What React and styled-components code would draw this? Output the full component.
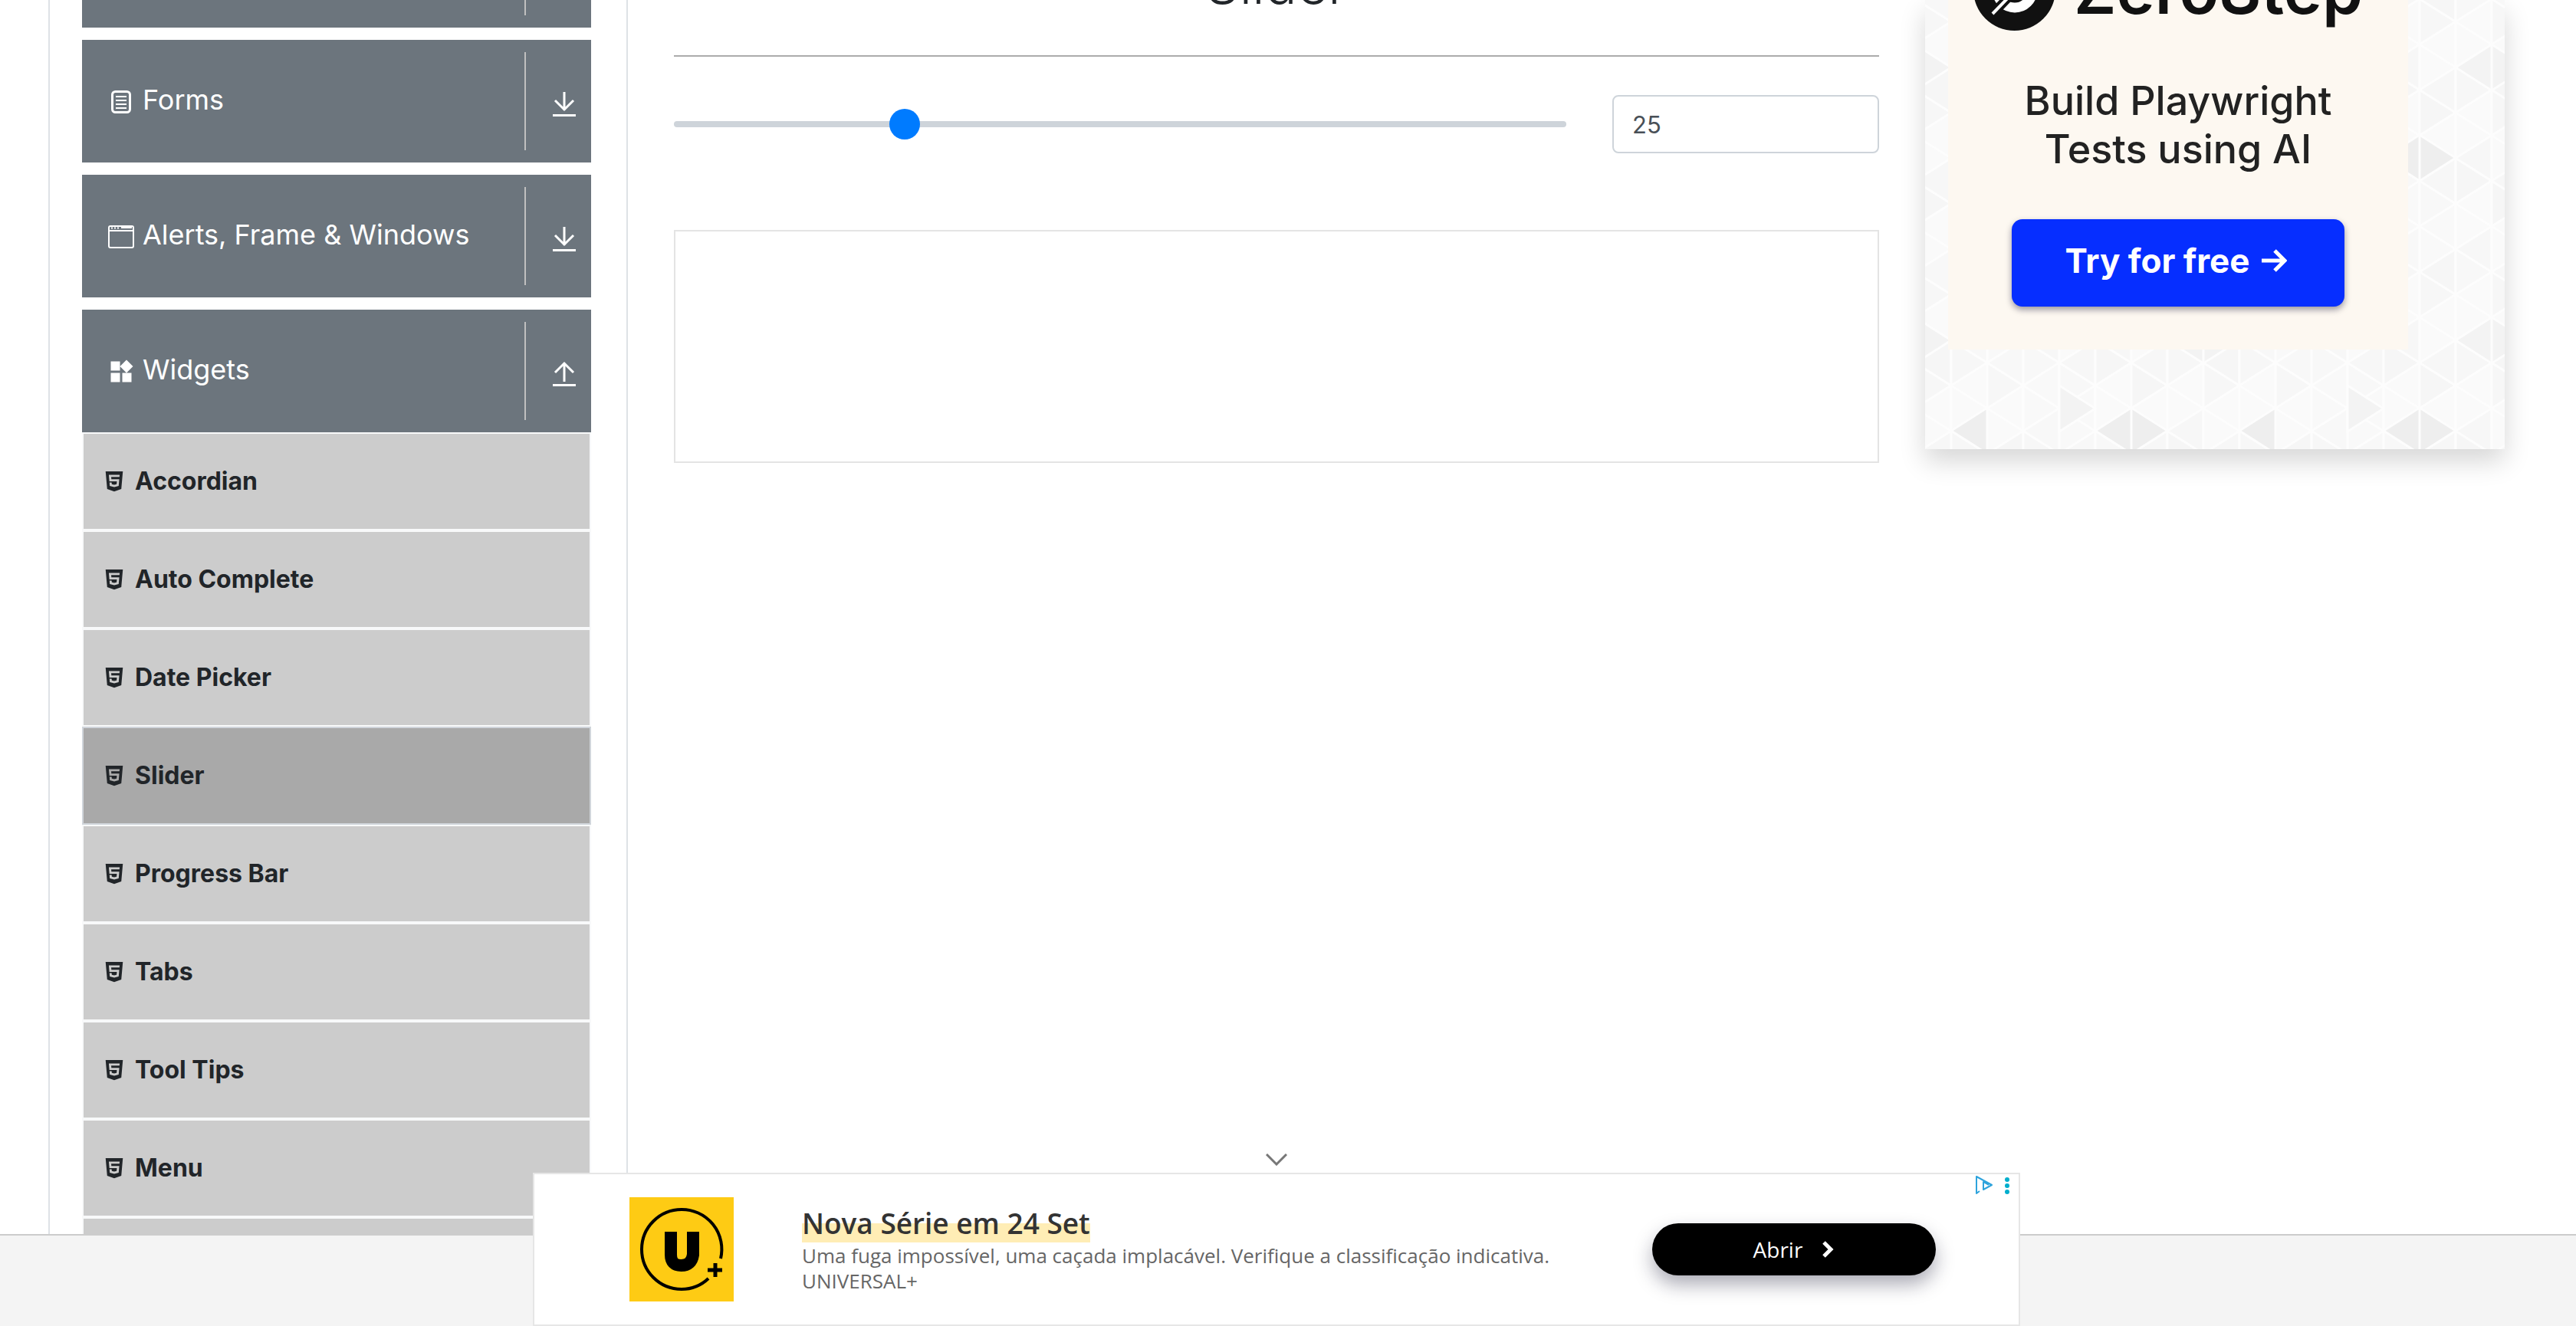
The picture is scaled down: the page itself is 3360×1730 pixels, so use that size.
import React, { useState } from "react";
import styled, { createGlobalStyle } from "styled-components";
import { FaHtml5 } from "react-icons/fa";
import { MdWidgets } from "react-icons/md";

const Global = createGlobalStyle`
  * { box-sizing: border-box; }
  html, body { margin: 0; padding: 0; }
  body { background: #fff; color: #212529; font-family: Inter, "Liberation Sans", sans-serif; }
  h1, h2, p, ul { margin: 0; padding: 0; }
`;

const Page = styled.div`
  display: flex;
  flex-direction: column;
  height: 100vh;
  overflow: hidden;
`;

const Columns = styled.div`
  flex: 1;
  min-height: 0;
  overflow: hidden;
  display: grid;
  grid-template-columns: 756px minmax(0, 1fr) 756px;
  padding: 0 93px 0 63px;
`;

const Sidebar = styled.nav`
  display: flex;
  flex-direction: column;
  gap: 16px;
  padding: 0 46px 0 42px;
  border-left: 2px solid #dee2e6;
  border-right: 2px solid #dee2e6;
`;

const GroupHeader = styled.button`
  display: flex;
  flex-direction: row;
  align-items: stretch;
  width: 100%;
  height: 160px;
  padding: 16px 0;
  border: 0;
  background: #6c757d;
  color: #fff;
  font: 400 36px/56px Inter, "Liberation Sans", sans-serif;
  text-align: left;
`;

const GroupCut = styled.div`
  display: flex;
  height: 36px;
  padding-bottom: 16px;
  background: #6c757d;
`;

const GroupTitle = styled.span`
  flex: 1;
  display: flex;
  align-items: center;
  gap: 10px;
  padding: 0 0 5px 33px;
  white-space: nowrap;
  svg { margin-top: 6px; }
`;

const GroupToggle = styled.span`
  width: 87px;
  border-left: 2px solid #c0c0c0;
  display: flex;
  align-items: center;
  justify-content: center;
  padding: 7px 0 0 14px;
`;

const SubList = styled.ul`
  list-style: none;
  margin-top: -16px;
`;

const SubItem = styled.li`
  height: 128px;
  border: 2px solid ${(p) => (p.$active ? "#d0d5db" : "#f8f9fa")};
  background: ${(p) => (p.$active ? "#a9a9a9" : "#ccc")};
`;

const SubLink = styled.a`
  display: flex;
  align-items: center;
  gap: 12px;
  height: 100%;
  padding-left: 25px;
  color: #212529;
  font-size: 32px;
  line-height: 48px;
  font-weight: 700;
  text-decoration: none;
`;

const Main = styled.main`
  display: flex;
  flex-direction: column;
  padding: 0 60px;
`;

const Heading = styled.div`
  display: flex;
  align-items: flex-end;
  justify-content: center;
  height: 74px;
  padding-bottom: 44px;
  border-bottom: 2px solid #acacac;
  h1 { flex: none; font-size: 70px; line-height: 96px; font-weight: 300; }
`;

const SliderRow = styled.form`
  display: grid;
  grid-template-columns: minmax(0, 1164fr) minmax(0, 348fr);
  gap: 60px;
  align-items: center;
  height: 76px;
  margin-top: 50px;
`;

const Range = styled.input`
  appearance: none;
  width: 100%;
  height: 40px;
  margin: 0;
  background: transparent;
  &::-webkit-slider-runnable-track {
    height: 8px;
    border-radius: 4px;
    background: #ced4da;
  }
  &::-webkit-slider-thumb {
    appearance: none;
    width: 40px;
    height: 40px;
    margin-top: -16px;
    border-radius: 50%;
    background: #007bff;
  }
`;

const ValueBox = styled.input`
  width: 100%;
  height: 76px;
  padding: 0 24px;
  border: 2px solid #ced4da;
  border-radius: 8px;
  background: #fff;
  color: #495057;
  font: 400 31px/48px Inter, "Liberation Sans", sans-serif;
`;

const Placeholder = styled.div`
  height: 304px;
  margin-top: 100px;
  border: 2px solid #e4e4e4;
`;

const SideAd = styled.aside`
  position: relative;
  display: flex;
  height: 586px;
  padding: 0 126px 130px 30px;
  background: #fafafa;
  box-shadow: 0 16px 32px rgba(0, 0, 0, 0.16);
`;

const Pattern = styled.svg`
  position: absolute;
  inset: 0;
  width: 100%;
  height: 100%;
`;

const Creative = styled.div`
  position: relative;
  flex: 1;
  display: flex;
  flex-direction: column;
  align-items: center;
  background: #fdf8f1;
`;

const Brand = styled.div`
  display: flex;
  align-items: flex-end;
  justify-content: flex-start;
  gap: 24px;
  width: 100%;
  height: 40px;
  padding-left: 33px;
  color: #111;
  svg { flex: none; }
  strong { flex: none; font-size: 85px; line-height: 104px; font-weight: 600; }
`;

const Pitch = styled.p`
  margin-top: 60px;
  color: #222;
  font-size: 52px;
  line-height: 63px;
  font-weight: 500;
  text-align: center;
`;

const TryButton = styled.button`
  display: flex;
  align-items: center;
  justify-content: center;
  gap: 14px;
  width: 434px;
  height: 114px;
  margin-top: 60px;
  padding: 0 6px 6px 0;
  border: 0;
  border-radius: 14px;
  background: #062eff;
  box-shadow: 0 4px 8px rgba(0, 0, 40, 0.4);
  color: #fff;
  font: 700 44px/56px Inter, "Liberation Sans", sans-serif;
`;

const Footer = styled.footer`
  height: 120px;
  border-top: 2px solid #ccc;
  background: #f4f4f4;
`;

const BannerDock = styled.section`
  position: fixed;
  left: 695px;
  right: 725px;
  bottom: 0;
  display: flex;
  flex-direction: column;
`;

const Collapse = styled.button`
  align-self: center;
  display: flex;
  align-items: flex-end;
  height: 32px;
  padding: 0 0 9px;
  border: 0;
  background: none;
`;

const Banner = styled.div`
  position: relative;
  display: flex;
  align-items: center;
  height: 200px;
  padding: 0 108px 0 124px;
  border: 2px solid #e6e6e6;
  background: #fff;
  font-family: "Open Sans", "Noto Sans", sans-serif;
`;

const BannerText = styled.div`
  flex: 1;
  margin-left: 89px;
  padding-bottom: 2px;
`;

const BannerTitle = styled.h2`
  width: fit-content;
  margin-bottom: 1px;
  background: linear-gradient(transparent 25px, #ffedb5 25px);
  color: #333;
  font-size: 37px;
  line-height: 50px;
  font-weight: 600;
`;

const BannerBody = styled.p`
  max-width: 1040px;
  color: #666;
  font-size: 26px;
  line-height: 33px;
`;

const OpenButton = styled.button`
  display: flex;
  align-items: center;
  justify-content: center;
  gap: 26px;
  width: 370px;
  height: 68px;
  padding: 0;
  border: 0;
  border-radius: 34px;
  background: #000;
  box-shadow: 0 12px 24px rgba(20, 20, 50, 0.35);
  color: #fff;
  font: 500 28px/40px "Open Sans", "Noto Sans", sans-serif;
`;

const AdMarks = styled.div`
  position: absolute;
  top: 2px;
  right: 12px;
  display: flex;
  gap: 16px;
`;

const FormsIcon = () => (
  <svg width="36" height="32" viewBox="0 0 36 32" fill="none" stroke="#fff" aria-hidden="true">
    <rect x="6.500" y="2.500" width="23" height="27" rx="4" strokeWidth="3" />
    <path d="M11 9h14M11 14h14M11 19h14M11 24h14" strokeWidth="2" />
  </svg>
);

const WindowIcon = () => (
  <svg width="36" height="32" viewBox="0 0 36 32" fill="none" stroke="#fff" aria-hidden="true">
    <rect x="2" y="2" width="32" height="28" rx="2" strokeWidth="2" />
    <path d="M2 8h32" strokeWidth="2" />
    <path d="M5 4.500h2M9 4.500h2M13 4.500h2M18 4h14" strokeWidth="2" />
  </svg>
);

const WidgetsIcon = () => <MdWidgets size={36} aria-hidden="true" />;

const ToggleIcon = ({ up }) => (
  <svg width="30" height="34" viewBox="0 0 30 34" fill="none" stroke="#fff" strokeWidth="3" aria-hidden="true">
    {up ? <path d="M15 27V3M3 15L15 3l12 12" /> : <path d="M15 1v24M3 12l12 12 12-12" />}
    <path d="M0 31.500h30" />
  </svg>
);

const groups = [
  { title: "Forms", Icon: FormsIcon },
  { title: "Alerts, Frame & Windows", Icon: WindowIcon },
  { title: "Widgets", Icon: WidgetsIcon, open: true },
];

const widgets = ["Accordian", "Auto Complete", "Date Picker", "Slider", "Progress Bar", "Tabs", "Tool Tips", "Menu"];

const shades = ["#f8f8f8", "#fafafa", "#f7f7f7", "#fafafa", "#f7f7f7", "#f9f9f9", "#f6f6f6", "#fafafa"];

function Triangles() {
  const tiles = [];
  const w = 47;
  const h = 356 / 6;
  for (let col = 0; col < 8; col++) {
    for (let row = -1; row < 7; row++) {
      const x = col * w;
      const off = col % 2 === 1 ? h / 2 : 0;
      const top = row * h + off + h / 2;
      const seed = (row + 6) % 6;
      tiles.push(
        <path key={`a${col}-${row}`} d={`M${x} ${top}v${h}l${w} ${-h / 2}z`} fill={shades[(col * 3 + seed * 5) % 8]} />,
        <path key={`b${col}-${row}`} d={`M${x + w} ${top - h / 2}v${h}l${-w} ${-h / 2}z`} fill={shades[(col * 5 + seed * 3 + 2) % 8]} />
      );
    }
  }
  return (
    <Pattern aria-hidden="true">
      <defs>
        <pattern id="tri" width="376" height="356" patternUnits="userSpaceOnUse" x="81" y="-31">
          <rect width="376" height="356" fill="#f8f8f8" />
          <g stroke="#fdfdfd" strokeWidth="3">
            {tiles}
            <path d="M188 207l-47 30 47 30 47 -30z" fill="#eeeeee" />
            <path d="M188 207v60" />
            <path d="M282 89l-47 30 47 30 47 -30z" fill="#f3f3f3" />
            <path d="M282 89v60" />
            <path d="M376 207v60l-47 -30z" fill="#eeeeee" />
            <path d="M94 178v60l47 -30z" fill="#f3f3f3" />
          </g>
        </pattern>
      </defs>
      <rect width="100%" height="100%" fill="url(#tri)" />
    </Pattern>
  );
}

export default function App() {
  const [value, setValue] = useState(25);
  return (
    <Page>
      <Global />
      <Columns>
        <Sidebar>
          <GroupCut>
            <GroupTitle />
            <GroupToggle />
          </GroupCut>
          {groups.map(({ title, Icon, open }) => (
            <GroupHeader key={title} type="button" aria-expanded={!!open}>
              <GroupTitle>
                <Icon />
                {title}
              </GroupTitle>
              <GroupToggle>
                <ToggleIcon up={open} />
              </GroupToggle>
            </GroupHeader>
          ))}
          <SubList>
            {widgets.map((name) => (
              <SubItem key={name} $active={name === "Slider"}>
                <SubLink href="#">
                  <FaHtml5 size={30} aria-hidden="true" />
                  {name}
                </SubLink>
              </SubItem>
            ))}
            <SubItem />
          </SubList>
        </Sidebar>
        <Main>
          <Heading>
            <h1>Slider</h1>
          </Heading>
          <SliderRow>
            <Range type="range" min="0" max="100" value={value} aria-label="Slider" onChange={(e) => setValue(e.target.value)} />
            <ValueBox type="text" value={value} aria-label="Slider value" onChange={(e) => setValue(e.target.value)} />
          </SliderRow>
          <Placeholder />
        </Main>
        <SideAd>
          <Triangles />
          <Creative>
            <Brand>
              <svg width="107" height="107" viewBox="0 0 107 107" aria-hidden="true">
                <circle cx="53.500" cy="53.500" r="53.500" fill="#111" />
                <circle cx="54" cy="54" r="23" fill="none" stroke="#fff" strokeWidth="13" />
                <path d="M22 88L88 20" stroke="#111" strokeWidth="12" />
                <path d="M25 85L85 23" stroke="#fff" strokeWidth="4" />
              </svg>
              <strong>ZeroStep</strong>
            </Brand>
            <Pitch>
              Build Playwright
              <br />
              Tests using AI
            </Pitch>
            <TryButton type="button">
              Try for free
              <svg width="34" height="34" viewBox="0 0 34 34" fill="none" stroke="#fff" strokeWidth="5" aria-hidden="true">
                <path d="M1 17h30M18 4l13 13-13 13" />
              </svg>
            </TryButton>
          </Creative>
        </SideAd>
      </Columns>
      <Footer />
      <BannerDock>
        <Collapse type="button" aria-label="Collapse">
          <svg width="28" height="16" viewBox="0 0 28 16" fill="none" stroke="#777" strokeWidth="3" aria-hidden="true">
            <path d="M1 1l13 13L27 1" />
          </svg>
        </Collapse>
        <Banner>
          <svg width="136" height="136" viewBox="0 0 136 136" aria-hidden="true">
            <rect width="136" height="136" fill="#fecb14" />
            <path d="M103 106A51 51 0 0 1 68 120A52 52 0 0 1 68 16A52 52 0 0 1 119 80" fill="none" stroke="#000" strokeWidth="4" />
            <path d="M54 45v30q0 14 13.500 14T83 75V45" fill="none" stroke="#000" strokeWidth="16" />
            <path d="M112 86v18M102 95h19" stroke="#000" strokeWidth="5" />
          </svg>
          <BannerText>
            <BannerTitle>Nova Série em 24 Set</BannerTitle>
            <BannerBody>Uma fuga impossível, uma caçada implacável. Verifique a classificação indicativa. UNIVERSAL+</BannerBody>
          </BannerText>
          <OpenButton type="button">
            Abrir
            <svg width="16" height="22" viewBox="0 0 16 22" fill="none" stroke="#fff" strokeWidth="5" aria-hidden="true">
              <path d="M2 2l9 9-9 9" />
            </svg>
          </OpenButton>
          <AdMarks>
            <svg width="24" height="24" viewBox="0 0 24 24" fill="none" stroke="#2ea3dc" strokeWidth="2" aria-hidden="true">
              <path d="M7 20l-4 3V1l20 11-11 6V8l7 4" strokeLinejoin="round" />
            </svg>
            <svg width="6" height="24" viewBox="0 0 6 24" fill="#00aecd" aria-hidden="true">
              <circle cx="3" cy="5" r="3" />
              <circle cx="3" cy="13" r="3" />
              <circle cx="3" cy="21" r="3" />
            </svg>
          </AdMarks>
        </Banner>
      </BannerDock>
    </Page>
  );
}
